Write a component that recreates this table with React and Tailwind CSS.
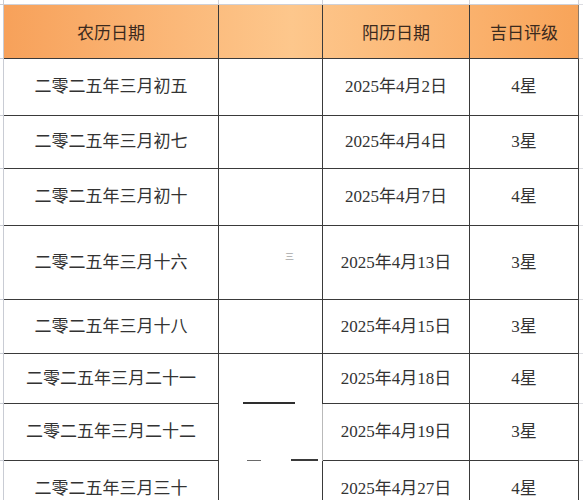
import React from "react";

// 吉日一览（表格截图再现）
const rows = [
  { lunar: "二零二五年三月初五", solar: "2025年4月2日", star: "4星", h: "h-[57px]" },
  { lunar: "二零二五年三月初七", solar: "2025年4月4日", star: "3星", h: "h-[53px]" },
  { lunar: "二零二五年三月初十", solar: "2025年4月7日", star: "4星", h: "h-[57px]" },
  { lunar: "二零二五年三月十六", solar: "2025年4月13日", star: "3星", h: "h-[74px]", mark: true },
  { lunar: "二零二五年三月十八", solar: "2025年4月15日", star: "3星", h: "h-[54px]" },
  { lunar: "二零二五年三月二十一", solar: "2025年4月18日", star: "4星", h: "h-[50px]", smudge: "top" },
  { lunar: "二零二五年三月二十二", solar: "2025年4月19日", star: "3星", h: "h-[57px]", smudge: "bottom" },
  { lunar: "二零二五年三月三十", solar: "2025年4月27日", star: "4星", h: "h-[57px]" },
];

const cell = "flex shrink-0 items-center justify-center border-r border-b border-[#3a3a3a]";

const Row = ({ h, children }) => (
  <div className={`flex ${h}`}>
    <div className="w-[4px] shrink-0 border-r border-b border-[#c9ccd4]" />
    {children}
    <div className="flex-1 border-b border-[#dcdde2]" />
  </div>
);

const SecondCell = ({ row }) => {
  if (row.smudge === "top") {
    return (
      <div className="flex w-[104px] shrink-0 flex-col justify-end border-r border-[#3a3a3a]">
        <div className="ml-[24px] h-[2px] w-[52px] bg-[#2e2e2e]" />
      </div>
    );
  }
  if (row.smudge === "bottom") {
    return (
      <div className="flex w-[104px] shrink-0 flex-col justify-end border-r border-[#b9b9b9]">
        <div className="flex h-[2px] items-end">
          <div className="ml-[28px] h-[1px] w-[14px] bg-[#6a6a6a]" />
          <div className="ml-[30px] h-[2px] w-[27px] bg-[#3a3a3a]" />
        </div>
      </div>
    );
  }
  return (
    <div className={`${cell} w-[104px]`}>
      {row.mark && (
        <span className="mb-[10px] ml-[38px] text-[9px] leading-none text-[#a8a8a8]">三</span>
      )}
    </div>
  );
};

export default function App() {
  return (
    <div className="h-[500px] w-[583px] overflow-hidden bg-white font-['Liberation_Serif','Noto_Sans_CJK_SC',serif] text-[17px] text-[#333333]">
      {/* 上端のグリッド線 */}
      <Row h="h-[5px]">
        <div className="w-[215px] shrink-0 border-r border-b border-[#cfd1d8]" />
        <div className="w-[104px] shrink-0 border-r border-b border-[#cfd1d8]" />
        <div className="w-[147px] shrink-0 border-r border-b border-[#cfd1d8]" />
        <div className="w-[109px] shrink-0 border-r border-b border-[#cfd1d8]" />
      </Row>

      {/* ヘッダー */}
      <Row h="h-[54px]">
        <div className="flex bg-linear-to-r from-[#f7a15a] via-[#fdc78c] to-[#f8a459] font-['Noto_Sans_CJK_SC',sans-serif] text-[#3b2a1e]">
          <div className={`${cell} w-[215px]`}>农历日期</div>
          <div className={`${cell} w-[104px]`} />
          <div className={`${cell} w-[147px]`}>阳历日期</div>
          <div className={`${cell} w-[109px] border-r-[#8a7a6a]`}>吉日评级</div>
        </div>
      </Row>

      {rows.map((row) => (
        <Row key={row.solar} h={row.h}>
          <div className={`${cell} w-[215px]`}>{row.lunar}</div>
          <SecondCell row={row} />
          <div className={`${cell} w-[147px]`}>{row.solar}</div>
          <div className={`${cell} w-[109px]`}>{row.star}</div>
        </Row>
      ))}
    </div>
  );
}
